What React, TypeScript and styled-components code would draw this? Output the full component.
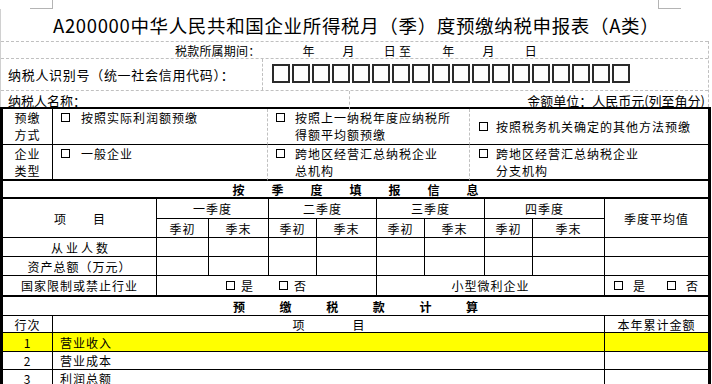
import React from "react";
import styled, { createGlobalStyle } from "styled-components";

const GlobalStyle = createGlobalStyle`
  html, body {
    margin: 0;
    padding: 0;
    background: #fff;
  }
  body {
    font-family: "Noto Sans CJK SC", "Noto Sans", sans-serif;
    color: #000;
  }
`;

const GRID = "#000";
const DASH = "#c0c0c0";

const Page = styled.div`
  width: 712px;
  height: 384px;
  overflow: hidden;
  background: #fff;
`;

const CornerRow = styled.div`
  display: flex;
  justify-content: space-between;
  padding: 0 31px 0 30px;
  height: 9px;
`;

const CornerMark = styled.div<{ $side: "left" | "right" }>`
  width: 22px;
  height: 8px;
  border-bottom: 1px solid #b4b4b4;
  border-${(p) => p.$side === "left" ? "right" : "left"}: 1px solid #b4b4b4;
`;

const Title = styled.h1`
  margin: 0;
  height: 32px;
  line-height: 32px;
  padding-left: 52px;
  border-left: 1px solid #d0d0d0;
  font-size: 18.5px;
  letter-spacing: 0.65px;
  font-weight: 400;
  white-space: nowrap;
`;

const Info = styled.div`
  width: 709px;
  box-sizing: border-box;
  border-left: 1px solid #d0d0d0;
  border-right: 1px dashed ${DASH};
  font-size: 13px;
`;

const InfoRow = styled.div<{ $h: number; $cols?: string }>`
  display: grid;
  grid-template-columns: ${(p) => p.$cols ?? "1fr"};
  height: ${(p) => p.$h}px;
  box-sizing: border-box;
  border-top: 1px dashed ${DASH};
`;

const InfoCell = styled.div<{ $divider?: boolean; $end?: boolean; $pad?: number; $track?: number }>`
  display: flex;
  align-items: center;
  justify-content: ${(p) => (p.$end ? "flex-end" : "flex-start")};
  padding: 0 ${(p) => (p.$end ? 3 : 0)}px 0 ${(p) => p.$pad ?? 7}px;
  border-right: ${(p) => (p.$divider ? `1px dashed ${DASH}` : "none")};
  letter-spacing: ${(p) => p.$track ?? 0}px;
  white-space: nowrap;
`;

const PeriodText = styled.span`
  font-size: 12px;
  letter-spacing: 0.2px;
`;

const DatePart = styled.span<{ $gap: number }>`
  margin-left: ${(p) => p.$gap}px;
`;

const IdBoxes = styled.div`
  display: flex;
  gap: 2px;
  padding-left: 9px;
  align-items: center;
`;

const IdBox = styled.span`
  width: 18px;
  height: 19px;
  box-sizing: border-box;
  border: 2px solid #2a2a2a;
  margin-top: -3px;
`;

const Frame = styled.div`
  width: 711px;
  box-sizing: border-box;
  border: 3px solid ${GRID};
  border-top-width: 2px;
  border-bottom: none;
  font-size: 12px;
  letter-spacing: 1px;
`;

const Sheet = styled.div<{ $cols: string; $rows: string }>`
  display: grid;
  grid-template-columns: ${(p) => p.$cols};
  grid-template-rows: ${(p) => p.$rows};
`;

const Cell = styled.div<{
  $span?: number;
  $rowSpan?: number;
  $right?: "solid" | "dashed" | "none";
  $bottom?: number;
  $align?: "left" | "center";
  $valign?: "top" | "center";
  $fill?: string;
  $pad?: number;
}>`
  grid-column: span ${(p) => p.$span ?? 1};
  grid-row: span ${(p) => p.$rowSpan ?? 1};
  box-sizing: border-box;
  border-right: ${(p) =>
    p.$right === "none"
      ? "none"
      : p.$right === "dashed"
      ? `1px dashed ${DASH}`
      : `1px solid ${GRID}`};
  border-bottom: ${(p) => p.$bottom ?? 1}px solid ${GRID};
  display: flex;
  align-items: ${(p) => (p.$valign === "top" ? "flex-start" : "center")};
  justify-content: ${(p) => (p.$align === "left" ? "flex-start" : "center")};
  padding-left: ${(p) => p.$pad ?? 0}px;
  background: ${(p) => p.$fill ?? "transparent"};
  line-height: 17px;
  white-space: nowrap;
`;

const Stack = styled.div`
  text-align: center;
  line-height: 17px;
`;

const Option = styled.div`
  display: flex;
  align-items: flex-start;
  line-height: 17px;
`;

const CheckBox = styled.span<{ $gap?: number }>`
  flex: none;
  width: 9px;
  height: 9px;
  box-sizing: border-box;
  border: 1px solid ${GRID};
  margin: 4px ${(p) => p.$gap ?? 10}px 0 0;
`;

const YesNo = styled.div<{ $pairGap: number }>`
  display: flex;
  align-items: center;
  gap: ${(p) => p.$pairGap}px;
  line-height: 17px;
`;

const Choice = styled.span`
  display: inline-flex;
  align-items: flex-start;
`;

const Spread = styled.span<{ $gap: number; $bold?: boolean }>`
  display: inline-flex;
  gap: ${(p) => p.$gap}px;
  letter-spacing: 0;
  font-weight: ${(p) => (p.$bold ? 700 : 400)};
`;

const Spaced = ({ text, gap, bold }: { text: string; gap: number; bold?: boolean }) => (
  <Spread $gap={gap} $bold={bold}>
    {[...text].map((c, i) => (
      <span key={i}>{c}</span>
    ))}
  </Spread>
);

const Opt = ({ lines, pad }: { lines: string[]; pad: number }) => (
  <Option>
    <CheckBox $gap={pad} />
    <div>
      {lines.map((l) => (
        <div key={l}>{l}</div>
      ))}
    </div>
  </Option>
);

const YesNoPair = ({ boxGap, pairGap }: { boxGap: number; pairGap: number }) => (
  <YesNo $pairGap={pairGap}>
    <Choice>
      <CheckBox $gap={boxGap} />是
    </Choice>
    <Choice>
      <CheckBox $gap={boxGap} />否
    </Choice>
  </YesNo>
);

const QUARTER_COLS = "154px 52px 60px 48px 60px 48px 60px 48px 72px 103px";
const quarters = ["一季度", "二季度", "三季度", "四季度"];

const calcRows = [
  { no: "1", name: "营业收入", fill: "#ffff00" },
  { no: "2", name: "营业成本" },
  { no: "3", name: "利润总额" },
];

export default function App() {
  return (
    <Page>
      <GlobalStyle />
      <CornerRow>
        <CornerMark $side="left" />
        <CornerMark $side="right" />
      </CornerRow>
      <Title>A200000中华人民共和国企业所得税月（季）度预缴纳税申报表（A类）</Title>

      <Info>
        <InfoRow $h={17}>
          <InfoCell $pad={174}>
            <PeriodText>
              税款所属期间：
              <DatePart $gap={42}>年</DatePart>
              <DatePart $gap={28}>月</DatePart>
              <DatePart $gap={29}>日</DatePart>
              <DatePart $gap={3}>至</DatePart>
              <DatePart $gap={31}>年</DatePart>
              <DatePart $gap={28}>月</DatePart>
              <DatePart $gap={30}>日</DatePart>
            </PeriodText>
          </InfoCell>
        </InfoRow>
        <InfoRow $h={32} $cols="262px 1fr">
          <InfoCell $divider $track={0.7}>
            纳税人识别号（统一社会信用代码）：
          </InfoCell>
          <IdBoxes>
            {Array.from({ length: 18 }, (_, i) => (
              <IdBox key={i} />
            ))}
          </IdBoxes>
        </InfoRow>
        <InfoRow $h={17} $cols="349px 1fr">
          <InfoCell $divider>纳税人名称：</InfoCell>
          <InfoCell $end>金额单位：人民币元(列至角分)</InfoCell>
        </InfoRow>
      </Info>

      <Frame>
        <Sheet $cols="50px 215px 202px 238px" $rows="36px 36px">
          <Cell $valign="top">
            <Stack>
              <div>预缴</div>
              <div>方式</div>
            </Stack>
          </Cell>
          <Cell $right="dashed" $align="left" $valign="top" $pad={8}>
            <Opt lines={["按照实际利润额预缴"]} pad={11} />
          </Cell>
          <Cell $right="dashed" $align="left" $valign="top" $pad={8}>
            <Opt lines={["按照上一纳税年度应纳税所", "得额平均额预缴"]} pad={10} />
          </Cell>
          <Cell $right="none" $align="left" $pad={9}>
            <Opt lines={["按照税务机关确定的其他方法预缴"]} pad={8} />
          </Cell>

          <Cell $valign="top" $bottom={2}>
            <Stack>
              <div>企业</div>
              <div>类型</div>
            </Stack>
          </Cell>
          <Cell $right="dashed" $align="left" $valign="top" $pad={8} $bottom={2}>
            <Opt lines={["一般企业"]} pad={11} />
          </Cell>
          <Cell $right="dashed" $align="left" $valign="top" $pad={8} $bottom={2}>
            <Opt lines={["跨地区经营汇总纳税企业", "总机构"]} pad={10} />
          </Cell>
          <Cell $right="none" $align="left" $valign="top" $pad={9} $bottom={2}>
            <Opt lines={["跨地区经营汇总纳税企业", "分支机构"]} pad={8} />
          </Cell>
        </Sheet>

        <Sheet $cols="1fr" $rows="18px">
          <Cell $right="none" $bottom={2}>
            <Spaced text="按季度填报信息" gap={27} bold />
          </Cell>
        </Sheet>

        <Sheet $cols={QUARTER_COLS} $rows="20px 19px 19px 19px 21px">
          <Cell $rowSpan={2}>
            <Spaced text="项目" gap={27} />
          </Cell>
          {quarters.map((q) => (
            <Cell key={q} $span={2}>
              {q}
            </Cell>
          ))}
          <Cell $rowSpan={2} $right="none">
            季度平均值
          </Cell>
          {quarters.map((q) => (
            <React.Fragment key={q}>
              <Cell>季初</Cell>
              <Cell>季末</Cell>
            </React.Fragment>
          ))}

          {["从业人数", "资产总额（万元）"].map((label) => (
            <React.Fragment key={label}>
              <Cell>
                {label === "从业人数" ? <Spaced text={label} gap={3} /> : label}
              </Cell>
              {Array.from({ length: 8 }, (_, i) => (
                <Cell key={i} />
              ))}
              <Cell $right="none" />
            </React.Fragment>
          ))}

          <Cell $bottom={2}>国家限制或禁止行业</Cell>
          <Cell $span={4} $bottom={2}>
            <YesNoPair boxGap={6} pairGap={25} />
          </Cell>
          <Cell $span={4} $bottom={2}>
            小型微利企业
          </Cell>
          <Cell $right="none" $bottom={2}>
            <YesNoPair boxGap={10} pairGap={21} />
          </Cell>
        </Sheet>

        <Sheet $cols="1fr" $rows="19px">
          <Cell $right="none">
            <Spaced text="预缴税款计算" gap={34.6} bold />
          </Cell>
        </Sheet>

        <Sheet $cols="50px 552px 103px" $rows="17px 19px 18px 18px">
          <Cell>行次</Cell>
          <Cell>
            <Spaced text="项目" gap={48} />
          </Cell>
          <Cell $right="none">本年累计金额</Cell>
          {calcRows.map((r) => (
            <React.Fragment key={r.no}>
              <Cell $fill={r.fill}>{r.no}</Cell>
              <Cell $fill={r.fill} $align="left" $pad={7}>
                {r.name}
              </Cell>
              <Cell $fill={r.fill} $right="none" />
            </React.Fragment>
          ))}
        </Sheet>
      </Frame>
    </Page>
  );
}
